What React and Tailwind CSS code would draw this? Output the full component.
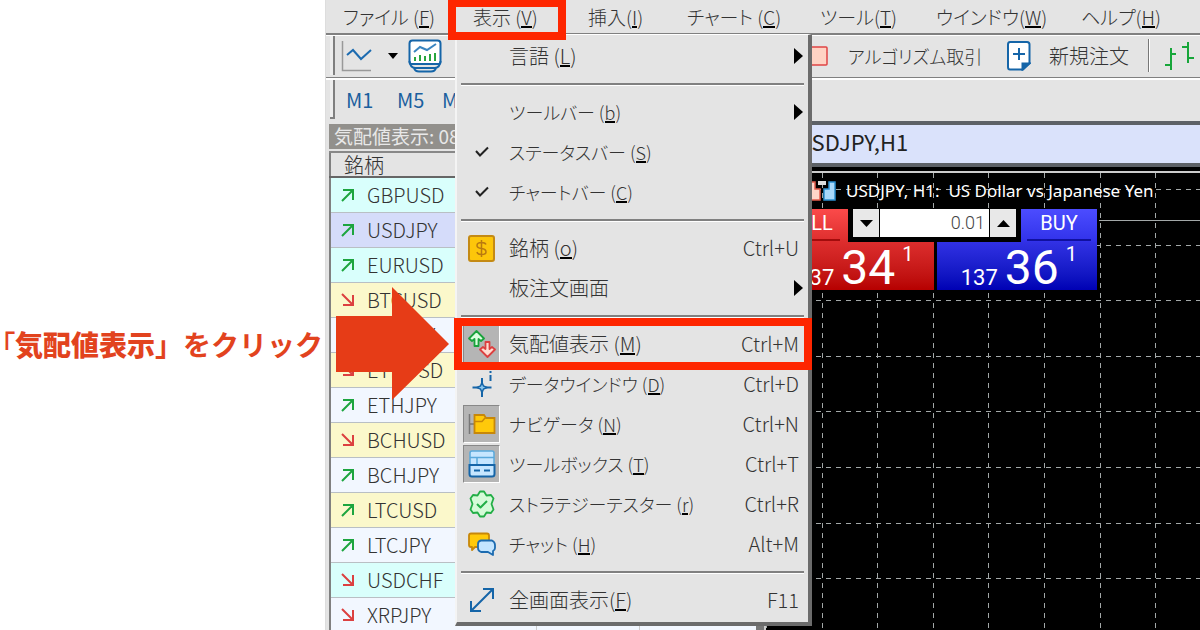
import { useState } from "react";

const MENUS = [
  { label: "ファイル (", accel: "F", width: "w-[130px]" },
  { label: "表示 (", accel: "V", width: "w-[115px]" },
  { label: "挿入(", accel: "I", width: "w-[99px]" },
  { label: "チャート (", accel: "C", width: "w-[133px]" },
  { label: "ツール(", accel: "T", width: "w-[116px]" },
  { label: "ウインドウ(", accel: "W", width: "w-[145px]" },
  { label: "ヘルプ(", accel: "H", width: "w-[100px]" },
];

const VIEW_MENU = [
  { label: "言語 (", accel: "L", submenu: true },
  { separator: true },
  { label: "ツールバー (", accel: "b", submenu: true, kana: true },
  { label: "ステータスバー (", accel: "S", icon: <CheckIcon />, kana: true },
  { label: "チャートバー (", accel: "C", icon: <CheckIcon />, kana: true },
  { separator: true },
  { label: "銘柄 (", accel: "o", shortcut: "Ctrl+U", icon: <SymbolIcon /> },
  { label: "板注文画面", submenu: true },
  { separator: true },
  { label: "気配値表示 (", accel: "M", shortcut: "Ctrl+M", icon: <QuotesIcon />, pressed: true, marked: true },
  { label: "データウインドウ (", accel: "D", shortcut: "Ctrl+D", icon: <DataIcon />, kana: true },
  { label: "ナビゲータ (", accel: "N", shortcut: "Ctrl+N", icon: <NavigatorIcon />, pressed: true, kana: true },
  { label: "ツールボックス (", accel: "T", shortcut: "Ctrl+T", icon: <ToolboxIcon />, pressed: true, kana: true },
  { label: "ストラテジーテスター (", accel: "r", shortcut: "Ctrl+R", icon: <TesterIcon />, kana: true },
  { label: "チャット (", accel: "H", shortcut: "Alt+M", icon: <ChatIcon />, kana: true },
  { separator: true },
  { label: "全画面表示(", accel: "F", shortcut: "F11", icon: <FullscreenIcon /> },
];

const SYMBOLS = [
  { name: "GBPUSD", up: true, bg: "bg-[#d9fffc]" },
  { name: "USDJPY", up: true, bg: "bg-[#d5dcfa]" },
  { name: "EURUSD", up: true, bg: "bg-[#d9fffc]" },
  { name: "BTCUSD", up: false, bg: "bg-[#fbf8cb]" },
  { name: "BTCJPY", up: false, bg: "bg-[#f2f7ff]" },
  { name: "ETHUSD", up: false, bg: "bg-[#fbf8cb]" },
  { name: "ETHJPY", up: true, bg: "bg-[#f2f7ff]" },
  { name: "BCHUSD", up: false, bg: "bg-[#fbf8cb]" },
  { name: "BCHJPY", up: true, bg: "bg-[#f2f7ff]" },
  { name: "LTCUSD", up: true, bg: "bg-[#fbf8cb]" },
  { name: "LTCJPY", up: true, bg: "bg-[#f2f7ff]" },
  { name: "USDCHF", up: false, bg: "bg-[#d9fffc]" },
  { name: "XRPJPY", up: false, bg: "bg-[#f2f7ff]" },
];

function App() {
  return (
    <div className="flex h-screen overflow-hidden bg-white font-['Noto_Sans_CJK_JP',sans-serif] font-light text-[20px] leading-6 text-[#333] [font-feature-settings:'palt']">
      <Caption />
      <div className="relative flex min-w-0 flex-1 flex-col overflow-hidden border-l border-[#ddd] bg-[#e4e4e4]">
        <MenuBar />
        <MainToolbar />
        <PeriodToolbar />
        <div className="flex min-h-0 flex-1">
          <MarketWatch />
          <ChartWindow />
        </div>
        <ViewMenu />
        <svg className="absolute top-[287px] left-[10px]" width="114" height="114" viewBox="0 0 114 114">
          <path d="M0 29H56V0L113 57L56 113V85H0Z" fill="#e63c17" />
        </svg>
      </div>
    </div>
  );
}

function Caption() {
  return (
    <div className="flex w-[325px] shrink-0 items-center justify-end pt-[58px] pr-[2px]">
      <p className="whitespace-nowrap text-[28px] leading-10 font-bold text-[#e2431e] [font-feature-settings:normal]">
        <span className="font-medium [font-feature-settings:'palt']">「</span>
        <span className="font-black">気配値表示</span>」をクリック
      </p>
    </div>
  );
}

function Label({ item }) {
  return (
    <span className={`whitespace-nowrap ${item.kana ? "text-[18px]" : ""}`}>
      {item.label}
      {item.accel && (
        <>
          <span className="inline-block border-b-2 border-black pb-px leading-4">{item.accel}</span>)
        </>
      )}
    </span>
  );
}

function MenuBar() {
  return (
    <nav className="flex h-[35px] shrink-0 items-center border-b-2 border-[#808080] pl-[17px] text-[19px]">
      {MENUS.map((m) => (
        <button key={m.accel} className={`${m.width} relative shrink-0 text-left`}>
          <Label item={m} />
          {m.accel === "V" && <span className="absolute -top-[6px] -left-[25px] z-20 h-[41px] w-[118px] border-8 border-[#fe2600]" />}
        </button>
      ))}
    </nav>
  );
}

function MainToolbar() {
  return (
    <div className="flex h-[43px] shrink-0 items-center border-t border-b border-t-white border-b-[#808080] pb-[2px] pl-[4px]">
      <div className="h-full w-[5px] border-r-2 border-[#808080] bg-[#eee]" />
      <button className="ml-[6px]" aria-label="ラインチャート">
        <svg width="32" height="32" viewBox="0 0 32 32" fill="none">
          <path d="M1.500 1V30.500H30" stroke="#999" strokeWidth="1.500" />
          <path d="M6 15L12 10L20 19L30 10" stroke="#1c6bb0" strokeWidth="2" />
        </svg>
      </button>
      <svg className="ml-[15px]" width="10" height="6" viewBox="0 0 10 6">
        <path d="M0 0H10L5 6Z" fill="#000" />
      </svg>
      <button className="ml-[10px]" aria-label="チャート">
        <svg width="34" height="34" viewBox="0 0 34 34" fill="none" stroke="#1565a8" strokeWidth="2">
          <path d="M1.500 4.500Q1.500 1.500 4.500 1.500H29.500Q32.500 1.500 32.500 4.500V23Q32.500 25 30.500 25H3.500Q1.500 25 1.500 23Z" fill="#fff" />
          <path d="M1.500 22Q2 28.500 7 29H27Q32 28.500 32.500 22M6 29Q7 32.500 11 32.500H23Q27 32.500 28 29" />
          <path d="M6 13L12 8L19 11L28 5" stroke="#3a85c0" />
          <path d="M7 22V18M12 22V16M17 22V17M22 22V15M27 22V14" stroke="#27a53d" />
        </svg>
      </button>
      <div className="w-[360px] shrink-0" />
      <button className="flex shrink-0 items-center gap-[20px] text-[18px]">
        <svg width="26" height="20" viewBox="0 0 26 20">
          <rect x="1" y="1" width="24" height="18" rx="1" fill="#ffd3c4" stroke="#e04444" strokeWidth="1.500" />
        </svg>
        アルゴリズム取引
      </button>
      <button className="ml-auto flex shrink-0 items-center gap-[18px]">
        <svg width="24" height="30" viewBox="0 0 24 30" fill="none" stroke="#1565a8" strokeWidth="2">
          <path d="M3 1H20Q22.500 1 22.500 3.500V22L16 28.500H3Q1 28.500 1 26V3.500Q1 1 3 1Z" fill="#fff" />
          <path d="M15.500 28.500V22.500H22.500Z" fill="#1565a8" />
          <path d="M6 13H18M12 7V19" />
        </svg>
        新規注文
      </button>
      <div className="ml-[19px] h-[33px] w-[2px] border-l border-l-[#777] bg-white" />
      <button className="ml-[14px] shrink-0" aria-label="バーチャート">
        <svg width="36" height="30" viewBox="0 0 36 30" stroke="#17a63a" strokeWidth="2">
          <path d="M7 7V29M1 24H7M7 13H12M24 1V22M18 6H24M24 17H30" />
        </svg>
      </button>
    </div>
  );
}

function PeriodToolbar() {
  return (
    <div className="flex h-[43px] shrink-0 items-center border-t-2 border-t-white pb-[2px] pl-[4px] font-normal text-[#1b5f9e]">
      <div className="h-full w-[5px] border-r-2 border-b-2 border-[#808080] bg-[#eee]" />
      <button className="ml-[11px] w-[51px] text-left">M1</button>
      <button className="w-[45px] text-left">M5</button>
      <button className="text-left">M15</button>
    </div>
  );
}

function MarketWatch() {
  return (
    <section className="flex w-[430px] shrink-0 flex-col overflow-hidden pt-[3px] pl-[3px]">
      <h2 className="h-[25px] shrink-0 bg-[#92908c] pl-[5px] text-[19px] font-normal text-[#e8e8e8]">気配値表示: 08:36:12</h2>
      <table className="mt-[2px] w-full table-fixed border-l-2 border-[#808080] bg-white">
        <thead>
          <tr className="h-[25px] border-t-2 border-b-2 border-t-[#888] border-b-[#666] bg-[#e4e4e4]">
            <th className="w-[206px] pl-[13px] text-left leading-5 font-light">銘柄</th>
            <th className="w-[103px]" />
            <th />
          </tr>
        </thead>
        <tbody>
          {SYMBOLS.map((s) => (
            <tr key={s.name} className={`h-[35px] border-b border-[#b9bfc4] ${s.bg}`}>
              <td className="pl-[10px]">
                <span className="flex items-center gap-[12px]">
                  <Trend up={s.up} />
                  {s.name}
                </span>
              </td>
              <td className="border-l border-[#ccc]" />
              <td className="border-l border-[#ccc]" />
            </tr>
          ))}
        </tbody>
      </table>
    </section>
  );
}

function Trend({ up }) {
  return up ? (
    <svg width="14" height="14" viewBox="0 0 14 14" fill="none" stroke="#1da53f" strokeWidth="2">
      <path d="M1 13L12 2M2 2H12V12" />
    </svg>
  ) : (
    <svg width="14" height="14" viewBox="0 0 14 14" fill="none" stroke="#dc4040" strokeWidth="2">
      <path d="M1 1L12 12M12 2V12H2" />
    </svg>
  );
}

function ChartWindow() {
  return (
    <section className="flex min-w-0 flex-1 flex-col border-l-8 border-[#777] bg-black">
      <h2 className="flex h-[46px] shrink-0 items-center border-t-4 border-b-4 border-[#5d6166] bg-[#dae2fb] pb-[6px] pl-[32px] text-[22px] font-normal text-[#222]">USDJPY,H1</h2>
      <div className="relative mt-[4px] min-h-0 flex-1 border-t-2 border-l-2 border-[#ccc]">
        <ChartGrid />
        <div className="absolute top-[6px] left-[38px] flex items-center gap-[10px]">
          <svg width="32" height="20" viewBox="0 0 32 20">
            <path d="M1 1H11V8H16V19H1Z" fill="#ffd5c8" stroke="#e25b4b" strokeWidth="1.500" />
            <path d="M31 1H25V8H20V19H31Z" fill="#a9d8fa" stroke="#2b8fd0" strokeWidth="1.500" />
            <path d="M14 0H22V4H14Z" fill="#ddd" />
          </svg>
          <span className="whitespace-pre font-['Noto_Sans',sans-serif] text-[17px] font-normal text-white">USDJPY, H1:  US Dollar vs Japanese Yen</span>
        </div>
        <OneClickPanel />
      </div>
    </section>
  );
}

function ChartGrid() {
  const columns = Array.from({ length: 16 }, (_, i) => Math.round(i * 55.6) + 0.5);
  const rows = Array.from({ length: 16 }, (_, i) => Math.round(16 + i * 55.6) + 0.5);
  return (
    <svg className="absolute inset-0 size-full" stroke="#a3a8a8" strokeWidth="1">
      {columns.map((x) => (
        <line key={x} x1={x} x2={x} y1="0" y2="100%" strokeDasharray="5 5" />
      ))}
      {rows.map((y) => (
        <line key={y} x1="0" x2="100%" y1={y} y2={y} strokeDasharray="5 5" />
      ))}
      <line x1="333" x2="100%" y1="47.500" y2="47.500" />
    </svg>
  );
}

function OneClickPanel() {
  const [volume, setVolume] = useState("0.01");

  return (
    <div className="absolute top-[36px] left-[7px] w-[324px] bg-black font-['Roboto',sans-serif] text-white">
      <div className="flex h-[33px]">
        <button className="w-[75px] bg-linear-to-b from-[#fb4a4a] to-[#dd2d2d] px-[8px] font-normal">
          <span className="block border-b-2 border-[#a30c0c] pb-[4px]">SELL</span>
        </button>
        <div className="flex h-[28px] flex-1 gap-px px-[5px]">
          <button className="flex w-[26px] items-center justify-center bg-[#e8e8e8]" aria-label="数量リスト">
            <svg width="13" height="7" viewBox="0 0 13 7">
              <path d="M0 0H13L6.500 7Z" fill="#000" />
            </svg>
          </button>
          <input
            aria-label="数量"
            className="w-0 min-w-0 flex-1 bg-white pr-[4px] text-right text-[18px] font-light text-[#444]"
            value={volume}
            onChange={(e) => setVolume(e.target.value)}
          />
          <button className="flex w-[26px] items-center justify-center bg-[#e8e8e8]" aria-label="数量を増やす">
            <svg width="13" height="7" viewBox="0 0 13 7">
              <path d="M0 7H13L6.500 0Z" fill="#000" />
            </svg>
          </button>
        </div>
        <button className="w-[76px] bg-linear-to-b from-[#4c4cff] to-[#3131ea] px-[6px] font-normal">
          <span className="block border-b-2 border-[#1010a0] pb-[4px]">BUY</span>
        </button>
      </div>
      <div className="flex h-[48px] gap-[3px]">
        <Price big="34" className="bg-linear-to-b from-[#dd2d2d] to-[#b60000]" />
        <Price big="36" className="bg-linear-to-b from-[#3131e4] to-[#0000b4]" />
      </div>
    </div>
  );
}

function Price({ big, className }) {
  return (
    <button className={`flex flex-1 items-end justify-end gap-[7px] pr-[20px] font-normal ${className}`}>
      <span className="text-[22px] leading-6">137</span>
      <span className="text-[48px] leading-[44px]">{big}</span>
      <span className="self-start text-[20px] leading-6">1</span>
    </button>
  );
}

function ViewMenu() {
  return (
    <div role="menu" className="absolute top-[34px] left-[129px] z-10 w-[357px] border-t border-r-4 border-b-4 border-l-2 border-t-white border-r-[#6b6b6b] border-b-[#6b6b6b] border-l-[#f4f4f4] bg-[#e4e4e4] pt-px pb-[2px]">
      {VIEW_MENU.map((item, i) =>
        item.separator ? (
          <div key={i} className="mx-[4px] flex h-[16px] items-center">
            <div className="h-[3px] w-full border-t-2 border-t-[#808080] bg-white" />
          </div>
        ) : (
          <MenuRow key={i} item={item} />
        )
      )}
    </div>
  );
}

function MenuRow({ item }) {
  return (
    <button role="menuitem" className="relative flex h-[40px] w-full items-center pr-[9px] pl-[6px] text-left">
      <span
        className={`mr-[9px] flex h-[38px] w-[37px] items-center justify-center ${
          item.pressed ? "border border-t-[#888] border-r-white border-b-white border-l-[#888] bg-[#b5b5b5]" : ""
        }`}
      >
        {item.icon}
      </span>
      <Label item={item} />
      {item.shortcut && <span className="ml-auto">{item.shortcut}</span>}
      {item.submenu && (
        <svg className="-mr-[4px] ml-auto" width="9" height="16" viewBox="0 0 9 16">
          <path d="M0 0L9 8L0 16Z" fill="#000" />
        </svg>
      )}
      {item.marked && <span className="absolute -top-[6px] -right-[4px] -bottom-[6px] -left-[3px] z-10 border-8 border-[#fe2600]" />}
    </button>
  );
}

function CheckIcon() {
  return (
    <svg width="14" height="12" viewBox="0 0 14 12" fill="none" stroke="#222" strokeWidth="2">
      <path d="M1 5L5 9.500L13 1.500" />
    </svg>
  );
}

function SymbolIcon() {
  return (
    <svg width="27" height="27" viewBox="0 0 27 27" fill="none">
      <rect x="1" y="1" width="25" height="25" rx="2" fill="#fdc60a" stroke="#c48a14" strokeWidth="2" />
      <path d="M18 9.500Q17 7.500 13.500 7.500Q9 7.500 9 10.500Q9 13 13.500 13.500Q18 14 18 17Q18 19.500 13.500 19.500Q9.500 19.500 9 17M13.500 5V22" stroke="#b97a10" strokeWidth="1.500" />
    </svg>
  );
}

function QuotesIcon() {
  return (
    <svg width="28" height="28" viewBox="0 0 28 28" strokeWidth="1.800" strokeLinejoin="round">
      <path d="M8.500 1L16 8.500L13 11L10.500 9V16H6.500V9L4 11L1 8.500Z" fill="#dcffdf" stroke="#1aa33c" />
      <path d="M19.500 27L12 19.500L15 17L17.500 19V12H21.500V19L24 17L27 19.500Z" fill="#ffdcd2" stroke="#dc4040" />
    </svg>
  );
}

function DataIcon() {
  return (
    <svg width="28" height="28" viewBox="0 0 28 28" fill="none" stroke="#1565a8" strokeWidth="2">
      <path d="M14 8V15M14 20V27M4.500 17.500H11M17 17.500H23.500" />
      <path d="M14 12.500L15.500 16L19 17.500L15.500 19L14 22.500L12.500 19L9 17.500L12.500 16Z" fill="#8cc8f0" strokeWidth="1.500" />
      <path d="M22.500 5V11M22.500 1V3" />
    </svg>
  );
}

function NavigatorIcon() {
  return (
    <svg width="28" height="22" viewBox="0 0 28 22" fill="none">
      <path d="M1.500 1V21M1.500 11H6" stroke="#777" strokeWidth="1.500" />
      <path d="M6.500 2H16L18 5H26.500V20H6.500Z" fill="#ffc90a" stroke="#c78709" strokeWidth="1.800" />
      <path d="M6.500 8.500H14L17 5" stroke="#c78709" strokeWidth="1.500" />
    </svg>
  );
}

function ToolboxIcon() {
  return (
    <svg width="28" height="28" viewBox="0 0 28 28" fill="#c6e6ff">
      <path d="M2 15V3Q2 1 4 1H24Q26 1 26 3V15M2 7.500H26M9 7.500V15" stroke="#5aa9dc" strokeWidth="1.500" />
      <path d="M1.500 15H26.500V24Q26.500 26.500 24 26.500H4Q1.500 26.500 1.500 24Z" stroke="#1565a8" strokeWidth="2" />
      <path d="M6 20.500H12M16 20.500H22" stroke="#1565a8" strokeWidth="2" />
    </svg>
  );
}

function TesterIcon() {
  return (
    <svg width="28" height="28" viewBox="0 0 28 28" stroke="#22ae46" strokeWidth="1.800" strokeLinejoin="round">
      <path d="M12 1.500H16L18.500 5.500L23 5L25.500 8.500L23.500 14L25.500 19.500L23 23L18.500 22.500L16 26.500H12L9.500 22.500L5 23L2.500 19.500L4.500 14L2.500 8.500L5 5L9.500 5.500Z" fill="#d5fbd8" />
      <path d="M9 14L12.500 17.500L19 11" fill="none" strokeWidth="2" />
    </svg>
  );
}

function ChatIcon() {
  return (
    <svg width="28" height="24" viewBox="0 0 28 24" strokeWidth="1.800" strokeLinejoin="round">
      <path d="M3 1.500H19Q21 1.500 21 3.500V13Q21 15 19 15H7L4 18V15H3Q1 15 1 13V3.500Q1 1.500 3 1.500Z" fill="#ffc90a" stroke="#c78709" />
      <path d="M13 8.500H24Q27 10 27 13V16Q27 18 25 19V23L20 20H13Q10 19 10 16V12Q10 9 13 8.500Z" fill="#c3e5ff" stroke="#1c6bb0" />
    </svg>
  );
}

function FullscreenIcon() {
  return (
    <svg width="26" height="26" viewBox="0 0 26 26" fill="none" stroke="#1565a8" strokeWidth="2">
      <path d="M2 24L24 2M14 2H24V12M2 14V24H12" />
    </svg>
  );
}

export default App;
